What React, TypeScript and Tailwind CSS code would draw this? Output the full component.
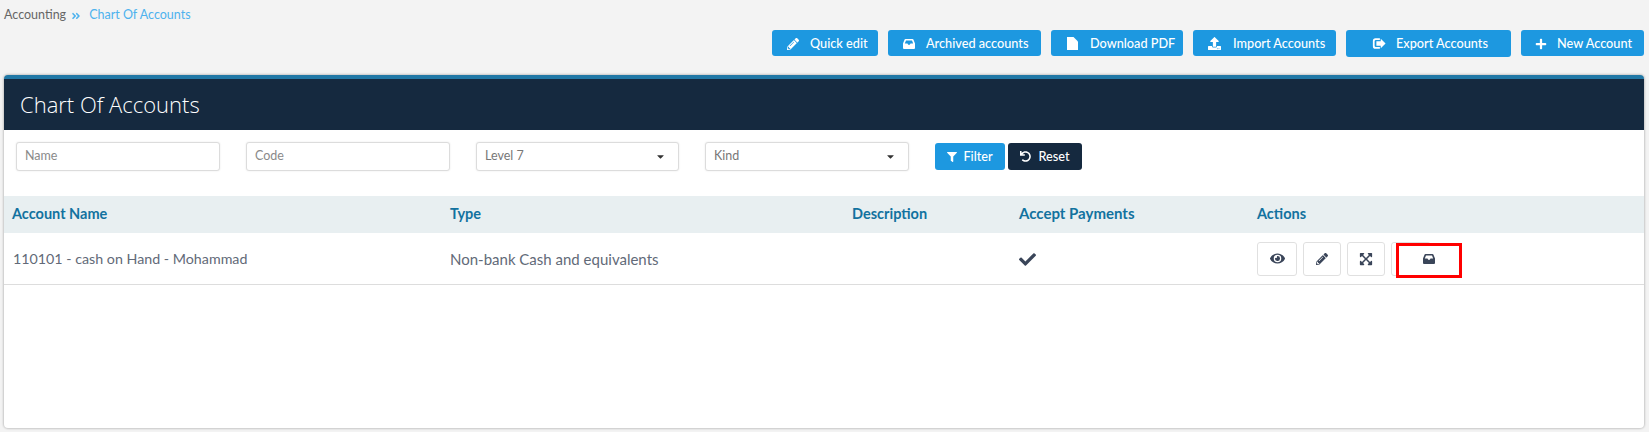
import { ReactNode } from "react";
import {
  FaAngleDoubleRight,
  FaCaretDown,
  FaCheck,
  FaEye,
  FaFilter,
  FaPencilAlt,
  FaPlus,
  FaUndo,
  FaUpload,
  FaExpandArrowsAlt,
} from "react-icons/fa";

const ExportIcon = () => (
  <svg viewBox="0 0 16 14" width="14" height="13" fill="currentColor">
    <path d="M4 1h5v2H4.500A1.500 1.500 0 0 0 3 4.500v5A1.500 1.500 0 0 0 4.500 11H9v2H4a3 3 0 0 1-3-3V4a3 3 0 0 1 3-3z" />
    <path d="M5 4.500h5V1.500l5.500 5.500-5.500 5.500v-3H5z" />
  </svg>
);

const InboxIcon = () => (
  <svg viewBox="0 0 12 10" width="12" height="10" fill="currentColor" fillRule="evenodd">
    <path d="M2.500 0h7a1 1 0 0 1 .9.600L12 4.500V9a1 1 0 0 1-1 1H1a1 1 0 0 1-1-1V4.500L1.600.600A1 1 0 0 1 2.500 0zM3 1.500 1.800 4.500h2.700l.7 1.300h1.600l.7-1.300h2.700L9 1.500z" />
  </svg>
);

const FileIcon = () => (
  <svg viewBox="0 0 12 13" width="12" height="13" fill="currentColor">
    <path d="M1 0h6.500L12 4.500V13H1z" />
  </svg>
);

const TopButton = ({ icon, label, className }: { icon: ReactNode; label: string; className: string }) => (
  <button className={`flex items-center bg-[#1d98e0] text-white rounded-[3px] text-[12.7px] font-medium ${className}`}>
    <span className="w-[14px] flex justify-center">{icon}</span>
    <span>{label}</span>
  </button>
);

const TextInput = ({ placeholder, className }: { placeholder: string; className: string }) => (
  <div className={`h-[29px] flex items-center px-[8px] bg-white border border-[#dcdcdc] rounded-[3px] shadow-[0_0_2px_rgba(0,0,0,0.1)] text-[12.5px] text-[#8a8a8a] ${className}`}>
    {placeholder}
  </div>
);

const SelectBox = ({ value, className }: { value: string; className: string }) => (
  <div className={`h-[29px] flex items-center justify-between pl-[8px] pr-[12px] bg-white border border-[#dcdcdc] rounded-[3px] shadow-[0_0_2px_rgba(0,0,0,0.1)] text-[12.5px] text-[#777777] ${className}`}>
    {value}
    <FaCaretDown size={11} className="text-[#333333]" />
  </div>
);

const ActionButton = ({ children, className }: { children: ReactNode; className: string }) => (
  <button className={`h-[34px] flex items-center justify-center bg-white border border-[#e0e0e0] rounded-[3px] text-[#3a4559] ${className}`}>
    {children}
  </button>
);

export default function App() {
  return (
    <div className="h-[432px] overflow-hidden bg-[#f3f3f3] font-['Lato','Liberation_Sans',sans-serif]">
      <div className="h-[30px] pl-[4px] pt-[7px] flex items-start text-[12.5px] leading-[16px]">
        <span className="text-[#666666]">Accounting</span>
        <FaAngleDoubleRight size={10} className="ml-[5px] mt-[4px] text-[#4db2ee]" />
        <span className="ml-[8px] text-[#4db2ee]">Chart Of Accounts</span>
      </div>

      <div className="flex justify-end items-start gap-[10px] pr-[5px] h-[45px]">
        <TopButton className="h-[26px] w-[106px] pl-[14px] pt-[1px] gap-[10px]" icon={<FaPencilAlt size={12} />} label="Quick edit" />
        <TopButton className="h-[26px] w-[153px] pl-[14px] pt-[1px] gap-[10px]" icon={<InboxIcon />} label="Archived accounts" />
        <TopButton className="h-[26px] w-[132px] pl-[14px] pt-[1px] gap-[11px]" icon={<FileIcon />} label="Download PDF" />
        <TopButton className="h-[26px] w-[143px] pl-[14px] pt-[1px] gap-[12px]" icon={<FaUpload size={13} />} label="Import Accounts" />
        <TopButton className="h-[27px] w-[165px] pl-[26px] gap-[10px]" icon={<ExportIcon />} label="Export Accounts" />
        <TopButton className="h-[26px] w-[123px] pl-[13px] pt-[1px] gap-[9px]" icon={<FaPlus size={12} />} label="New Account" />
      </div>

      <div className="ml-[4px] mr-[5px] h-[353px] bg-white rounded-[4px] border-t-[4px] border-t-[#2178a6] shadow-[0_0_2px_1px_rgba(0,0,0,0.18)] overflow-hidden">
        <div className="h-[51px] bg-[#15293f] flex items-center pl-[16px] pb-[1px] text-white text-[22px] font-['Open_Sans','Liberation_Sans',sans-serif] font-light">
          Chart Of Accounts
        </div>

        <div className="h-[66px] flex items-start pt-[12px] pl-[12px]">
          <TextInput placeholder="Name" className="w-[204px]" />
          <TextInput placeholder="Code" className="w-[204px] ml-[26px]" />
          <SelectBox value="Level 7" className="w-[203px] ml-[26px]" />
          <SelectBox value="Kind" className="w-[204px] ml-[26px]" />
          <button className="ml-[26px] mt-[1px] w-[70px] h-[27px] flex items-center justify-center gap-[6px] bg-[#1d98e0] text-white rounded-[3px] text-[12.7px] font-medium">
            <FaFilter size={10} />
            Filter
          </button>
          <button className="ml-[3px] mt-[1px] w-[74px] h-[27px] flex items-center justify-center gap-[7px] bg-[#15293f] text-white rounded-[3px] text-[12.7px] font-medium">
            <FaUndo size={11} />
            Reset
          </button>
        </div>

        <div className="h-[37px] pb-[2px] bg-[#e8eff1] mb-[1px] grid grid-cols-[438px_402px_167px_238px_1fr] items-center pl-[8px] text-[14.5px] font-bold text-[#12729f]">
          <div>Account Name</div>
          <div>Type</div>
          <div>Description</div>
          <div className="text-[15px]">Accept Payments</div>
          <div>Actions</div>
        </div>

        <div className="h-[51px] border-b border-[#dddddd] grid grid-cols-[438px_402px_167px_238px_1fr] items-center pl-[10px] text-[#626a78]">
          <div className="-ml-[1px] text-[14.25px]">110101 - cash on Hand - Mohammad</div>
          <div className="-ml-[2px] text-[15px]">Non-bank Cash and equivalents</div>
          <div />
          <div className="-ml-[2px]">
            <FaCheck size={17} className="text-[#3a4559]" />
          </div>
          <div className="-ml-[2px] relative flex items-center gap-[6px] pb-[1px]">
            <ActionButton className="w-[40px]">
              <FaEye size={15} />
            </ActionButton>
            <ActionButton className="w-[38px]">
              <FaPencilAlt size={12} />
            </ActionButton>
            <ActionButton className="w-[38px]">
              <FaExpandArrowsAlt size={14} />
            </ActionButton>
            <ActionButton className="w-[40px]">
              <span />
            </ActionButton>
            <div className="absolute left-[139px] top-[1px] w-[66px] h-[35px] pb-[3px] flex items-center justify-center bg-white border-[3px] border-[#ff0000] text-[#3a4559]">
              <InboxIcon />
            </div>
          </div>
        </div>
      </div>
    </div>
  );
}
